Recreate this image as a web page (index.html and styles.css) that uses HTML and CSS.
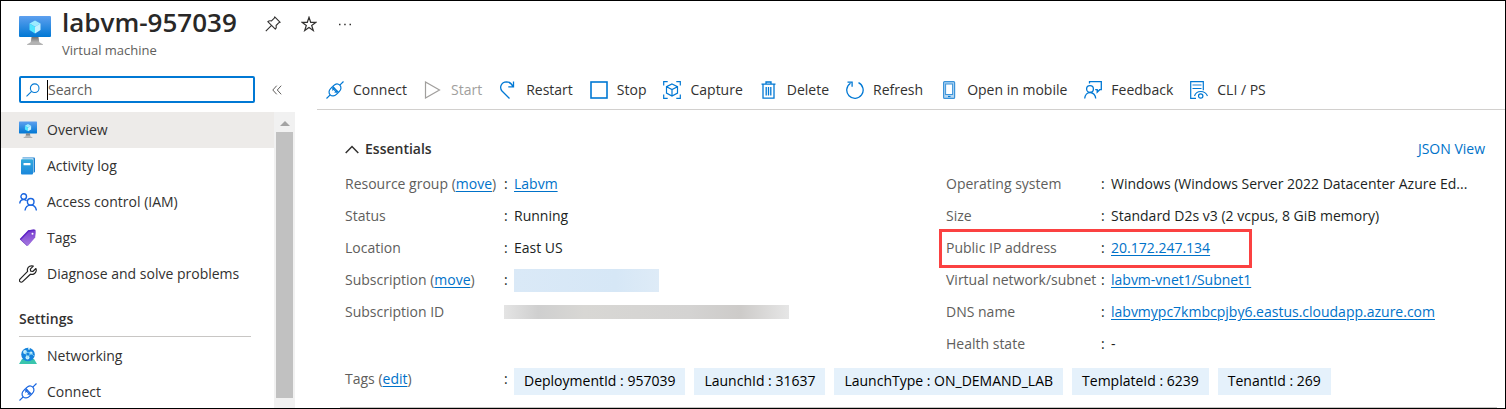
FILE: index.html
```
<!DOCTYPE html>
<html lang="en">
<head>
<meta charset="utf-8">
<title>labvm-957039 - Virtual machine</title>
<link rel="stylesheet" href="styles.css">
</head>
<body>
<svg class="defs" aria-hidden="true">
  <defs>
    <linearGradient id="screen" x1="0" y1="0" x2="0" y2="1"><stop offset="0" stop-color="#5ea0ef"/><stop offset="1" stop-color="#0078d4"/></linearGradient>
    <linearGradient id="stand" x1="0" y1="0" x2="0" y2="1"><stop offset="0" stop-color="#707070"/><stop offset="1" stop-color="#b8b8b8"/></linearGradient>
    <linearGradient id="book" x1="0" y1="0" x2="0" y2="1"><stop offset="0" stop-color="#32aadd"/><stop offset="1" stop-color="#1a87dc"/></linearGradient>
    <linearGradient id="tag" x1="0" y1="0" x2="0" y2="1"><stop offset="0" stop-color="#7a3fd0"/><stop offset="1" stop-color="#a67ae0"/></linearGradient>
    <symbol id="vm" viewBox="0 0 32 32">
      <rect x="0" y="1" width="32" height="21" rx="1" fill="url(#screen)"/>
      <path d="M12.500 22h7l.8 5.500h-8.600z" fill="url(#stand)"/>
      <path d="M8 30q0-1.200 1.500-1.500l2.500-1.500h8l2.500 1.500q1.500.3 1.500 1.500z" fill="#b3b3b3"/>
      <path d="M16 5.500l5.500 3.100L16 11.800l-5.500-3.200z" fill="#9cebff"/>
      <path d="M10.500 8.600L16 11.800v6.600l-5.500-3.300z" fill="#50e6ff"/>
      <path d="M21.500 8.600L16 11.800v6.600l5.500-3.300z" fill="#c3f1ff"/>
    </symbol>
    <symbol id="plug" viewBox="0 0 18 18">
      <g fill="none" stroke="currentColor" stroke-width="1.200">
        <path d="M.5 17.500l3.700-3.700M13.800 4.200L17.500.5"/>
        <path d="M4.200 13.800c-1.700-1.700-1.500-4.300.4-6.200l1.200-1.200 5.800 5.800-1.200 1.200c-1.900 1.900-4.500 2.100-6.200.4z"/>
        <path d="M13.800 4.200c1.700 1.700 1.500 4.300-.4 6.200l-.9.9-5.800-5.800.9-.9c1.900-1.900 4.500-2.100 6.200-.4z"/>
        <path d="M6.300 9.300l2.400-2.400M8.700 11.700l2.400-2.400"/>
      </g>
    </symbol>
  </defs>
</svg>

<div class="frame">
  <header class="header">
    <svg class="icon-resource" aria-hidden="true"><use href="#vm"/></svg>
    <div class="heading">
      <div class="title-row">
        <h1 class="title">labvm-957039</h1>
        <div class="title-actions">
          <button class="icon-button" aria-label="Pin"><svg class="icon-small" viewBox="0 0 16 16"><path d="M9.700.8l5.500 5.500-1.300.4-2.800 2.800c.5 1.600.2 2.700-.8 3.700L2.800 5.700c1-1 2.100-1.300 3.700-.8l2.800-2.800zM6.300 9.700L.8 15.200" fill="none" stroke="currentColor" stroke-width="1.100" stroke-linejoin="round"/></svg></button>
          <button class="icon-button" aria-label="Favorite"><svg class="icon-small" viewBox="0 0 16 16"><path d="M8 1.300l1.700 5h5.300l-4.300 3.100 1.600 5.100L8 11.400l-4.300 3.100 1.600-5.100L1 6.300h5.300z" fill="none" stroke="currentColor" stroke-width="1.200"/></svg></button>
          <button class="icon-button" aria-label="More"><svg class="icon-small" viewBox="0 0 16 16"><path d="M2 8.500h1.500M7.200 8.500h1.500M12.500 8.500h1.500" stroke="currentColor" stroke-width="1.400"/></svg></button>
        </div>
      </div>
      <p class="subtitle">Virtual machine</p>
    </div>
  </header>

  <div class="layout">
    <aside class="sidebar">
      <div class="search-row">
        <label class="search">
          <svg class="search-icon" viewBox="0 0 14 14" aria-hidden="true"><g fill="none" stroke="#0078d4" stroke-width="1.100"><circle cx="8.700" cy="5.200" r="4.300"/><path d="M5.600 8.300L.5 13.400"/></g></svg>
          <span class="caret"></span>
          <input class="search-input" type="text" placeholder="Search" aria-label="Search">
        </label>
        <button class="collapse" aria-label="Collapse menu"><svg class="collapse-icon" viewBox="0 0 10 10"><path d="M4.700.7L.8 5l3.900 4.300M9.200.7L5.300 5l3.900 4.300" fill="none" stroke="currentColor"/></svg></button>
      </div>
      <div class="menu-area">
        <nav class="menu">
          <a class="menu-item selected" href="#overview"><svg class="icon-menu"><use href="#vm"/></svg>Overview</a>
          <a class="menu-item" href="#activity"><svg class="icon-menu" viewBox="0 0 18 18"><path d="M3.500.5h11.500q1 0 1 1v13q0 1-1 1H3.500z" fill="#1b7fcf"/><path d="M3 1.300h11.500v14H3z" fill="#e3f4fb"/><rect x="2" y="2.300" width="12" height="15.200" rx="1" fill="url(#book)"/><rect x="4.500" y="6" width="7" height="2.300" rx=".5" fill="#fff"/></svg>Activity log</a>
          <a class="menu-item" href="#access"><svg class="icon-menu" viewBox="0 0 18 18"><g fill="none" stroke="#1a66e0" stroke-width="1.400"><circle cx="4.700" cy="3.600" r="2.800"/><path d="M.7 10.500c.3-2.400 1.900-4 4-4 1.200 0 2.200.5 2.900 1.300"/><circle cx="11.700" cy="8.800" r="3.300"/><path d="M6 17.500c.4-3.200 2.700-5.400 5.700-5.400s5.300 2.200 5.700 5.400"/></g></svg>Access control (IAM)</a>
          <a class="menu-item" href="#tags"><svg class="icon-menu" viewBox="0 0 18 18"><path d="M9.500 1.300l6-.8q1 0 1 1l-.5 6.500-8 9-7-6.500z" fill="#5f2bb8"/><path d="M9.700 2.500l5.600-.7q1.200 0 1.200 1.200l-.3 5.500L8.800 17 1.800 10.800z" fill="url(#tag)"/><path d="M1.300 10.500L9.500 2l5.500-.7" fill="none" stroke="#6227c9" stroke-width="1.500"/><circle cx="13.500" cy="4.700" r="1" fill="#fff"/></svg>Tags</a>
          <a class="menu-item" href="#diagnose"><svg class="icon-menu" viewBox="0 0 18 18"><path d="M16.900 3.500l-3.100 3-2.100-.4-.4-2 3-3C11.800.2 9 1.300 8.500 4c-.2.800-.1 1.700.1 2.300L1 14.100c-.8.900-.7 1.900 0 2.600.7.700 1.800.8 2.600 0l7.800-7.500c2.400.8 5.300-.6 5.800-3.300.1-.9 0-1.700-.3-2.400z" fill="none" stroke="#222" stroke-width="1.200" stroke-linejoin="round"/></svg>Diagnose and solve problems</a>
          <h2 class="menu-heading">Settings</h2>
          <a class="menu-item" href="#networking"><svg class="icon-menu" viewBox="0 0 18 18"><path d="M3 12h12l3 5H0z" fill="#39c5ad"/><circle cx="9" cy="7.500" r="6.800" fill="#1683dc"/><g fill="#c9effb"><circle cx="6" cy="5" r="1.900"/><circle cx="12" cy="6" r="1.600"/><circle cx="8.500" cy="10.500" r="2"/><circle cx="10" cy="1.800" r="1"/></g><path d="M6 5l6 1-3.500 4.500zM12 6l3 3" fill="none" stroke="#8fdcf5" stroke-width=".7"/></svg>Networking</a>
          <a class="menu-item" href="#connect"><svg class="icon-menu plug-menu"><use href="#plug"/></svg>Connect</a>
        </nav>
        <div class="scrollbar" aria-hidden="true"><span class="scroll-arrow"></span><span class="scroll-thumb"></span></div>
      </div>
    </aside>

    <main class="main">
      <div class="toolbar">
        <button class="command"><svg class="icon"><use href="#plug"/></svg>Connect</button>
        <button class="command" disabled><svg class="icon" viewBox="0 0 18 18"><path d="M1.500 1v16l14-8z" fill="none" stroke="currentColor" stroke-width="1.200"/></svg>Start</button>
        <button class="command"><svg class="icon" viewBox="0 0 18 18"><path d="M10.500 17.500L3 10C.2 6.500 2 1 7.500.8c3 0 5 1.700 6.500 4.700M14.500.5v5.300H9.300" fill="none" stroke="currentColor" stroke-width="1.300"/></svg>Restart</button>
        <button class="command"><svg class="icon" viewBox="0 0 18 18"><rect x="1" y="1" width="16" height="16" fill="none" stroke="currentColor" stroke-width="1.600"/></svg>Stop</button>
        <button class="command"><svg class="icon" viewBox="0 0 18 18"><g fill="none" stroke="currentColor" stroke-width="1.200"><path d="M.7 4.500V.7h4M13.300.7h4v3.800M17.300 13.500v3.800h-4M4.700 17.300h-4v-3.800"/><path d="M9 3l5.500 2.700v6.400L9 15l-5.500-2.900V5.700zM3.500 5.700L9 8.500l5.500-2.800M9 8.500V15"/></g></svg>Capture</button>
        <button class="command"><svg class="icon" viewBox="0 0 18 18"><g fill="none" stroke="currentColor" stroke-width="1.300"><path d="M1.500 3.200h14M6 3V1h5v2M3 3.500v13.700h11V3.500"/><path d="M6.200 6v8.500M8.500 6v8.500M10.800 6v8.500"/></g></svg>Delete</button>
        <button class="command"><svg class="icon" viewBox="0 0 18 18"><path d="M12.500 1.700A8.200 8.200 0 1 1 4.500 2.200M1.500 1.200h4.600v4.500" fill="none" stroke="currentColor" stroke-width="1.300"/></svg>Refresh</button>
        <button class="command"><svg class="icon" viewBox="0 0 18 18"><rect x="3.600" y=".6" width="11" height="16.800" rx="1" fill="#b3d6f2" stroke="#3b93d9" stroke-width="1.200"/><rect x="5.600" y="3" width="7" height="10.500" fill="#fff" stroke="#3b93d9"/><path d="M8 15.500h2.500" stroke="#0078d4" stroke-width="1.200"/></svg>Open in mobile</button>
        <button class="command"><svg class="icon" viewBox="0 0 18 18"><g fill="none" stroke="currentColor" stroke-width="1.300"><circle cx="6" cy="8" r="3.400"/><path d="M.7 17.500c.3-3.300 2.500-6 5.500-6s5.300 2.700 5.500 6M5.500 2.500V.7h11.800v8h-1.600l-2.500 2.500V8.700h-2"/></g></svg>Feedback</button>
        <button class="command"><svg class="icon" viewBox="0 0 18 18"><g fill="none" stroke="currentColor" stroke-width="1.200"><path d="M6 17.300H.7V.7h12.600v8.600M2.500 7.500h9"/><path d="M2.500 4h9" stroke="#8cc0eb" stroke-width="2"/><path d="M4.500 15c1-3 3.300-4.500 6.200-4.500s5.600 1.700 6.800 4.500"/><circle cx="10.700" cy="15" r="2.200"/></g></svg>CLI / PS</button>
      </div>

      <section class="essentials">
        <div class="essentials-head">
          <button class="essentials-toggle"><svg class="chevron" viewBox="0 0 14 9"><path d="M.7 8L7 1.500 13.300 8" fill="none" stroke="currentColor" stroke-width="1.500"/></svg>Essentials</button>
          <a class="json-link" href="#json">JSON View</a>
        </div>
        <div class="columns">
          <dl class="facts">
            <div class="fact"><dt>Resource group (<a href="#move">move</a>)</dt><dd><a href="#rg">Labvm</a></dd></div>
            <div class="fact"><dt>Status</dt><dd>Running</dd></div>
            <div class="fact"><dt>Location</dt><dd>East US</dd></div>
            <div class="fact"><dt>Subscription (<a href="#move">move</a>)</dt><dd><span class="mask mask-blue"></span></dd></div>
            <div class="fact plain"><dt>Subscription ID</dt><dd><span class="mask mask-gray"></span></dd></div>
          </dl>
          <dl class="facts facts-right">
            <div class="fact"><dt>Operating system</dt><dd>Windows (Windows Server 2022 Datacenter Azure Ed...</dd></div>
            <div class="fact"><dt>Size</dt><dd>Standard D2s v3 (2 vcpus, 8 GiB memory)</dd></div>
            <div class="fact highlighted"><dt>Public IP address</dt><dd><a href="#ip">20.172.247.134</a></dd></div>
            <div class="fact"><dt>Virtual network/subnet</dt><dd><a href="#vnet">labvm-vnet1/Subnet1</a></dd></div>
            <div class="fact"><dt>DNS name</dt><dd><a href="#dns">labvmypc7kmbcpjby6.eastus.cloudapp.azure.com</a></dd></div>
            <div class="fact"><dt>Health state</dt><dd>-</dd></div>
          </dl>
        </div>
        <dl class="facts tags">
          <div class="fact"><dt>Tags (<a href="#edit">edit</a>)</dt>
            <dd class="chips"><span class="chip">DeploymentId : 957039</span><span class="chip">LaunchId : 31637</span><span class="chip">LaunchType : ON_DEMAND_LAB</span><span class="chip">TemplateId : 6239</span><span class="chip">TenantId : 269</span></dd></div>
        </dl>
      </section>
    </main>
  </div>
</div>
</body>
</html>
```
FILE: styles.css
```
*, *::before, *::after { box-sizing: border-box; }
body { margin: 0; background: #fff; color: #323130; font: 14px/20px "Open Sans", "Noto Sans", sans-serif; }
h1, h2, p, dl, dd { margin: 0; }
a { color: #0072c9; text-underline-offset: 2px; }
button { border: 0; padding: 0; background: none; color: inherit; font: inherit; }
svg { display: block; flex: none; }
.defs { position: absolute; width: 0; height: 0; }

.frame { display: flex; flex-direction: column; height: 100vh; border: 1px solid #000; overflow: hidden; }

.header { display: flex; gap: 11px; padding: 5px 18px 0; height: 67px; flex: none; }
.icon-resource { width: 32px; height: 32px; margin-top: 9px; }
.title-row { display: flex; align-items: center; gap: 28px; }
.title { font-size: 26px; line-height: 32px; font-weight: 600; color: #292827; }
.title-actions { display: flex; gap: 20px; padding-top: 3px; }
.icon-small { width: 16px; height: 16px; }
.subtitle { font-size: 13px; line-height: 20px; padding-top: 2px; color: #605e5c; }

.layout { display: flex; flex: 1; min-height: 0; }
.sidebar { display: flex; flex-direction: column; width: 294px; flex: none; }
.search-row { display: flex; align-items: center; gap: 17px; padding: 8px 0 8px 18px; }
.search { display: flex; align-items: center; width: 236px; height: 27px; padding-left: 5px; border: 2px solid #0078d4; border-radius: 2px; }
.search-icon { width: 14px; height: 14px; margin-right: 7px; }
.caret { width: 1px; height: 20px; background: #000; }
.search-input { flex: 1; min-width: 0; border: 0; padding: 0; outline: 0; background: none; font: inherit; color: #323130; }
.search-input::placeholder { color: #605e5c; opacity: 1; }
.collapse { color: #605e5c; }
.collapse-icon { width: 10px; height: 10px; }

.menu-area { display: flex; flex: 1; min-height: 0; }
.menu { flex: 1; min-width: 0; overflow: hidden; }
.menu-item { display: flex; align-items: center; gap: 10px; height: 36px; padding-left: 18px; color: #323130; text-decoration: none; }
.menu-item.selected { background: #edebe9; }
.icon-menu { width: 18px; height: 18px; }
.plug-menu { color: #1a66e0; }
.menu-heading { margin: 9px 23px 1px 18px; height: 36px; font-size: 14px; line-height: 36px; font-weight: 600; border-bottom: 1px solid #c8c6c4; }
.scrollbar { display: flex; flex-direction: column; align-items: center; width: 21px; padding: 9px 0 10px; gap: 6px; background: #f1f1f1; }
.scroll-arrow { border: 5px solid transparent; border-top: 0; border-bottom-color: #a3a3a3; }
.scroll-thumb { flex: 1; width: 17px; background: #c1c1c1; }
.search-row { padding-bottom: 9px; }

.main { display: flex; flex-direction: column; flex: 1; min-width: 0; margin-left: 22px; }
.toolbar { display: flex; align-items: center; gap: 17px; height: 42px; padding: 2px 0 0 9px; border-bottom: 1px solid #d2d0ce; flex: none; white-space: nowrap; }
.command { display: flex; align-items: center; gap: 9px; }
.command:disabled { color: #a19f9d; }
.icon { width: 18px; height: 18px; color: #0078d4; }
.command:disabled .icon { color: #a19f9d; }

.essentials { margin: 0 8px 0 23px; padding: 29px 12px 10px 5px; border-bottom: 1px solid #c8c6c4; }
.essentials-head { display: flex; justify-content: space-between; padding-bottom: 9px; }
.essentials-toggle { display: flex; align-items: center; gap: 6px; font-weight: 600; }
.chevron { width: 14px; height: 9px; }
.json-link { text-decoration: none; }
.columns { display: grid; grid-template-columns: 1fr 1fr; gap: 62px; }
.facts { --label: 159px; }
.facts-right { --label: 155px; }
.fact { display: grid; grid-template-columns: var(--label) 1fr; align-items: center; height: 32px; position: relative; white-space: nowrap; }
dt { color: #605e5c; }
dd { display: flex; align-items: center; color: #201f1e; }
dd::before { content: ":"; width: 10px; flex: none; }
.plain dd::before { content: none; }
.mask { display: block; }
.mask-blue { width: 145px; height: 23px; background: linear-gradient(90deg, #dae9f7, #d6e7f6 70%, #deebf7); }
.mask-gray { width: 285px; height: 14px; background: linear-gradient(90deg, #e4e4e4, #cfcfcf 12%, #d8d7d4 28%, #d4d3d2 65%, #cdcbc9 83%, #e6e6e6); }
.highlighted::after { content: ""; position: absolute; left: -7px; top: -3px; width: 313px; height: 39px; border: 3px solid #fb4141; }
.tags { padding-top: 5px; }
.tags dt, .chips::before { padding-bottom: 4px; }
.chip { padding: 3px 10px 4px; margin-right: 9px; color: #000; background: #e5f1fb; }
```
